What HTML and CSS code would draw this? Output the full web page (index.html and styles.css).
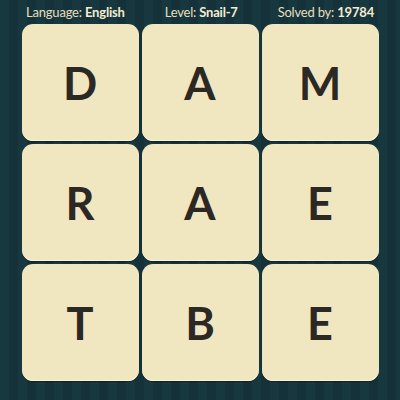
FILE: index.html
```html
<!DOCTYPE html>
<html>
<head>
<meta charset="utf-8">
<link rel="stylesheet" href="styles.css">
</head>
<body>
<div class="page">
  <div class="header">
    <span class="item">Language: <b>English</b></span>
    <span class="item">Level: <b>Snail-7</b></span>
    <span class="item">Solved by: <b>19784</b></span>
  </div>
  <div class="grid">
    <div class="tile">D</div>
    <div class="tile">A</div>
    <div class="tile">M</div>
    <div class="tile">R</div>
    <div class="tile">A</div>
    <div class="tile">E</div>
    <div class="tile">T</div>
    <div class="tile">B</div>
    <div class="tile">E</div>
  </div>
</div>
</body>
</html>
```

FILE: styles.css
```css
html, body {
  margin: 0;
  padding: 0;
}
body {
  width: 400px;
  height: 400px;
  overflow: hidden;
  background: repeating-linear-gradient(90deg, #183840 0 9px, #15323a 9px 18px);
  font-family: "Lato", "Open Sans", sans-serif;
}
.page {
  display: flex;
  flex-direction: column;
  align-items: center;
}
.header {
  width: 348px;
  height: 24px;
  display: flex;
  justify-content: space-between;
  align-items: center;
  color: #e6dfbd;
  font-size: 13px;
  letter-spacing: -0.2px;
  box-sizing: border-box;
}
.header b {
  font-weight: 700;
  color: #f3ecd0;
}
.grid {
  display: grid;
  grid-template-columns: repeat(3, 117px);
  grid-template-rows: repeat(3, 117px);
  gap: 3px;
}
.tile {
  background: #f0e7c0;
  border-radius: 11px;
  display: flex;
  align-items: center;
  justify-content: center;
  color: #2c2824;
  font-size: 45px;
  font-weight: 700;
  box-shadow: inset 0 -1px 0 #fbf5d8, 0 1px 1px rgba(0,0,0,0.35);
}
```
